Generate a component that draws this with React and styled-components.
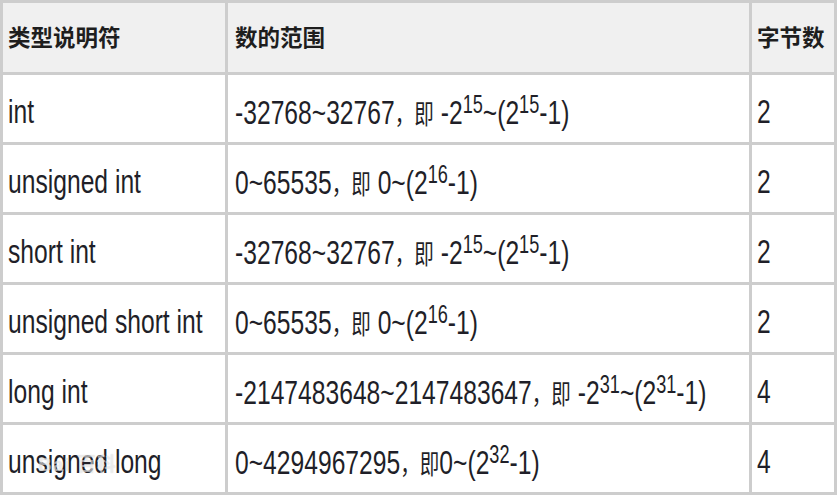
import React from 'react'
import styled, { createGlobalStyle } from 'styled-components'

const GlobalStyle = createGlobalStyle`
  html, body {
    margin: 0;
    padding: 0;
    background: #fff;
  }
`

const rows = [
  { type: 'int', range: ['-32768~32767', ' -2', '15', '~(2', '15', '-1)'], bytes: '2' },
  { type: 'unsigned int', range: ['0~65535', ' 0~(2', '16', '-1)'], bytes: '2' },
  { type: 'short int', range: ['-32768~32767', ' -2', '15', '~(2', '15', '-1)'], bytes: '2' },
  { type: 'unsigned short int', range: ['0~65535', ' 0~(2', '16', '-1)'], bytes: '2' },
  { type: 'long int', range: ['-2147483648~2147483647', ' -2', '31', '~(2', '31', '-1)'], bytes: '4' },
  { type: 'unsigned long', range: ['0~4294967295', '0~(2', '32', '-1)'], bytes: '4' },
]

const StyledPage = styled.div`
  position: relative;
  width: 840px;
  height: 500px;
  overflow: hidden;
`

const StyledTable = styled.div`
  display: grid;
  grid-template-columns: 225px 524px 85px;
  grid-template-rows: 72px repeat(6, 70px);
  width: 834px;
  border-left: 3px solid #cdcdcd;
  border-top: 3px solid #cdcdcd;
`

const StyledCell = styled.div`
  display: flex;
  align-items: center;
  border-right: 3px solid #cdcdcd;
  border-bottom: 3px solid #cdcdcd;
  background: ${({ head }) => (head ? '#f0f0f0' : '#ffffff')};
  padding-left: ${({ pad }) => pad}px;
  padding-top: ${({ head }) => (head ? 0 : 5)}px;
  padding-bottom: ${({ head }) => (head ? 4 : 0)}px;
  overflow: hidden;
`

const StyledHeadText = styled.span`
  font-family: 'Noto Sans CJK SC', 'Liberation Sans', sans-serif;
  font-weight: 700;
  font-size: 22.5px;
  color: #1e1e1e;
  white-space: nowrap;
`

const StyledText = styled.span`
  display: inline-block;
  font-family: 'Liberation Sans', 'Noto Sans CJK SC', sans-serif;
  font-size: 34px;
  color: #1f1f28;
  white-space: nowrap;
  transform: scaleX(0.725);
  transform-origin: left center;
`

const StyledCjk = styled.span`
  font-family: 'Noto Sans CJK SC', sans-serif;
  font-size: 27px;
`

const StyledSup = styled.span`
  font-size: 25px;
  vertical-align: 11px;
`

const StyledWatermark = styled.div`
  position: absolute;
  left: 38px;
  top: 449px;
  font-family: 'Liberation Sans', 'Noto Sans CJK SC', sans-serif;
  font-size: 19px;
  font-weight: 700;
  color: rgba(255, 255, 255, 0.5);
  text-shadow: 0 0 1px rgba(120, 120, 120, 0.3);
  letter-spacing: 1px;
  pointer-events: none;
`

const Range = ({ parts }) => {
  const [first, ...rest] = parts
  return (
    <StyledText>
      {first}
      <StyledCjk>，即</StyledCjk>
      {rest.map((p, i) => (i % 2 === 1 ? <StyledSup key={i}>{p}</StyledSup> : <span key={i}>{p}</span>))}
    </StyledText>
  )
}

const App = () => (
  <StyledPage>
    <GlobalStyle />
    <StyledTable>
      <StyledCell head pad={5}>
        <StyledHeadText>类型说明符</StyledHeadText>
      </StyledCell>
      <StyledCell head pad={7}>
        <StyledHeadText>数的范围</StyledHeadText>
      </StyledCell>
      <StyledCell head pad={5}>
        <StyledHeadText>字节数</StyledHeadText>
      </StyledCell>
      {rows.map(row => (
        <React.Fragment key={row.type}>
          <StyledCell pad={5}>
            <StyledText>{row.type}</StyledText>
          </StyledCell>
          <StyledCell pad={7}>
            <Range parts={row.range} />
          </StyledCell>
          <StyledCell pad={5}>
            <StyledText>{row.bytes}</StyledText>
          </StyledCell>
        </React.Fragment>
      ))}
    </StyledTable>
    <StyledWatermark>Bai 百科</StyledWatermark>
  </StyledPage>
)

export default App
